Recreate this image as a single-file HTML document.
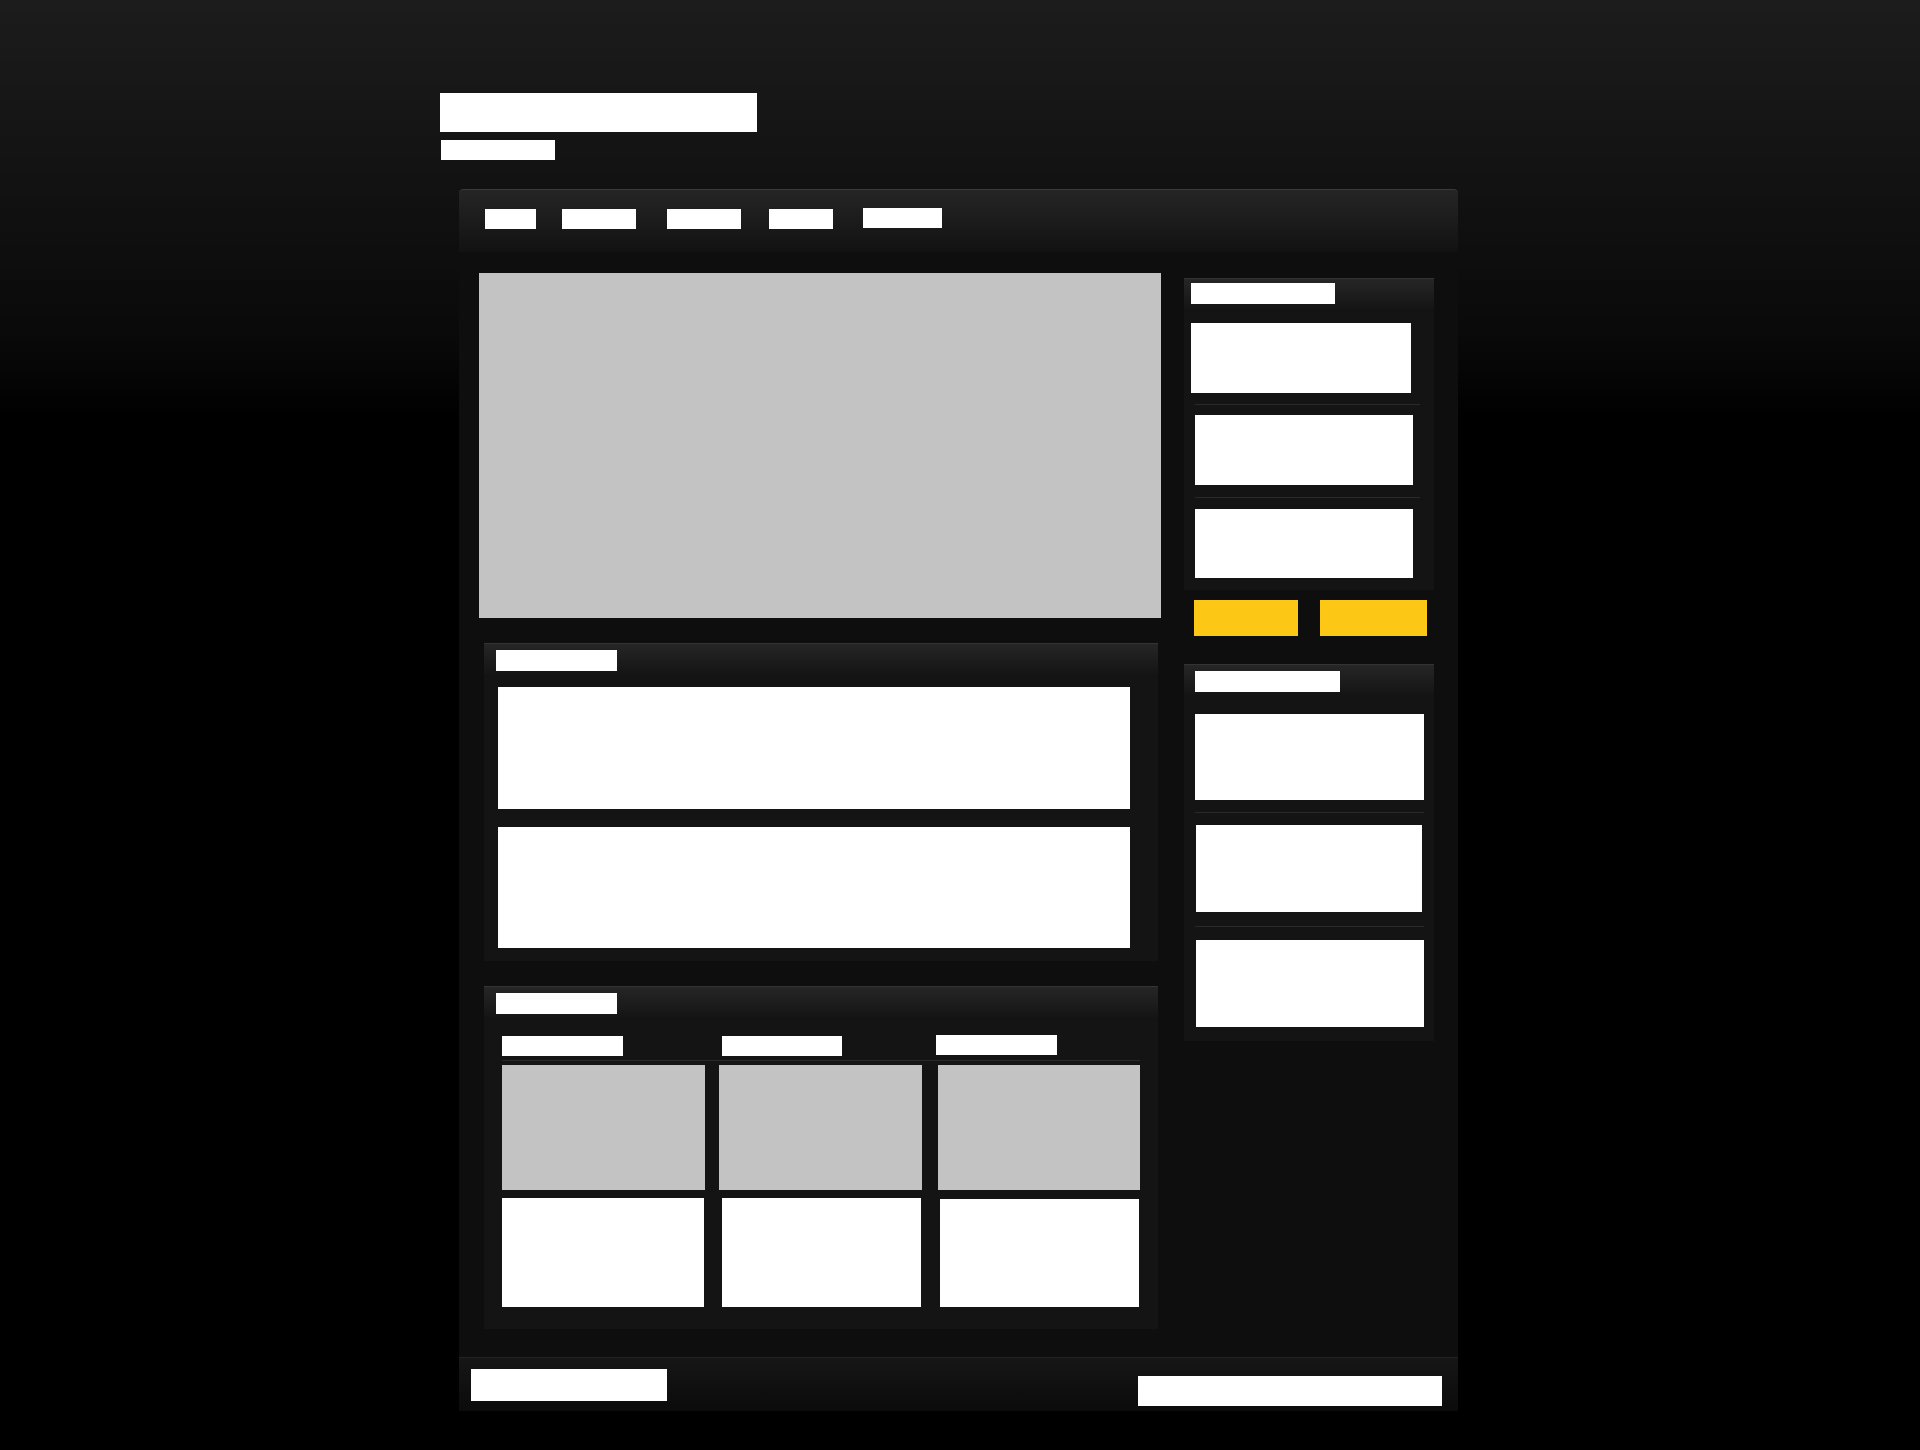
<!DOCTYPE html>
<html><head><meta charset="utf-8"><style>
html,body{margin:0;padding:0}
body{width:1920px;height:1450px;position:relative;overflow:hidden;background:linear-gradient(#1c1c1c 0px,#0a0a0a 330px,#000 420px,#000 1450px);font-family:"Liberation Sans",sans-serif}
div{position:absolute;box-sizing:border-box}
.w{background:#fff}
.g{background:#c3c3c3}
.y{background:#fcc815}
.hdr{background:linear-gradient(#262626,#131313);border-top:1px solid #333}
.pan{background:#141414}
</style></head><body>
<div class="w" style="left:440px;top:93px;width:317px;height:39px"></div>
<div class="w" style="left:441px;top:140px;width:114px;height:20px"></div>

<div style="left:459px;top:189px;width:999px;height:1222px;background:#0e0e0e"></div>
<div style="left:459px;top:189px;width:999px;height:63px;background:linear-gradient(#252525,#121212);border-top:1px solid #3a3a3a;border-radius:4px 4px 0 0"></div>
<div class="w" style="left:485px;top:209px;width:51px;height:20px"></div>
<div class="w" style="left:562px;top:209px;width:74px;height:20px"></div>
<div class="w" style="left:667px;top:209px;width:74px;height:20px"></div>
<div class="w" style="left:769px;top:209px;width:64px;height:20px"></div>
<div class="w" style="left:863px;top:208px;width:79px;height:20px"></div>

<div class="g" style="left:479px;top:273px;width:682px;height:345px"></div>

<div class="pan" style="left:1184px;top:278px;width:250px;height:312px"></div>
<div class="hdr" style="left:1184px;top:278px;width:250px;height:34px"></div>
<div class="w" style="left:1191px;top:283px;width:144px;height:21px"></div>
<div class="w" style="left:1191px;top:323px;width:220px;height:70px"></div>
<div style="left:1195px;top:404px;width:225px;height:1px;background:#2a2a2a"></div>
<div class="w" style="left:1195px;top:415px;width:218px;height:70px"></div>
<div style="left:1195px;top:497px;width:225px;height:1px;background:#2a2a2a"></div>
<div class="w" style="left:1195px;top:509px;width:218px;height:69px"></div>
<div class="y" style="left:1194px;top:600px;width:104px;height:36px"></div>
<div class="y" style="left:1320px;top:600px;width:107px;height:36px"></div>

<div class="pan" style="left:1184px;top:664px;width:250px;height:377px"></div>
<div class="hdr" style="left:1184px;top:664px;width:250px;height:34px"></div>
<div class="w" style="left:1195px;top:671px;width:145px;height:21px"></div>
<div class="w" style="left:1195px;top:714px;width:229px;height:86px"></div>
<div style="left:1195px;top:812px;width:229px;height:1px;background:#2a2a2a"></div>
<div class="w" style="left:1196px;top:825px;width:226px;height:87px"></div>
<div style="left:1195px;top:926px;width:229px;height:1px;background:#2a2a2a"></div>
<div class="w" style="left:1196px;top:940px;width:228px;height:87px"></div>

<div class="pan" style="left:484px;top:643px;width:674px;height:318px"></div>
<div class="hdr" style="left:484px;top:643px;width:674px;height:34px"></div>
<div class="w" style="left:496px;top:650px;width:121px;height:21px"></div>
<div class="w" style="left:498px;top:687px;width:632px;height:122px"></div>
<div class="w" style="left:498px;top:827px;width:632px;height:121px"></div>

<div class="pan" style="left:484px;top:986px;width:674px;height:343px"></div>
<div class="hdr" style="left:484px;top:986px;width:674px;height:34px"></div>
<div class="w" style="left:496px;top:993px;width:121px;height:21px"></div>
<div class="w" style="left:502px;top:1036px;width:121px;height:20px"></div>
<div class="w" style="left:722px;top:1036px;width:120px;height:20px"></div>
<div class="w" style="left:936px;top:1035px;width:121px;height:20px"></div>
<div style="left:502px;top:1060px;width:638px;height:1px;background:#2a2a2a"></div>
<div class="g" style="left:502px;top:1065px;width:203px;height:125px"></div>
<div class="g" style="left:719px;top:1065px;width:203px;height:125px"></div>
<div class="g" style="left:938px;top:1065px;width:202px;height:125px"></div>
<div class="w" style="left:502px;top:1198px;width:202px;height:109px"></div>
<div class="w" style="left:722px;top:1198px;width:199px;height:109px"></div>
<div class="w" style="left:940px;top:1199px;width:199px;height:108px"></div>

<div style="left:459px;top:1357px;width:999px;height:54px;background:linear-gradient(#161616,#0b0b0b);border-top:1px solid #222"></div>
<div class="w" style="left:471px;top:1369px;width:196px;height:32px"></div>
<div class="w" style="left:1138px;top:1376px;width:304px;height:30px"></div>
</body></html>
